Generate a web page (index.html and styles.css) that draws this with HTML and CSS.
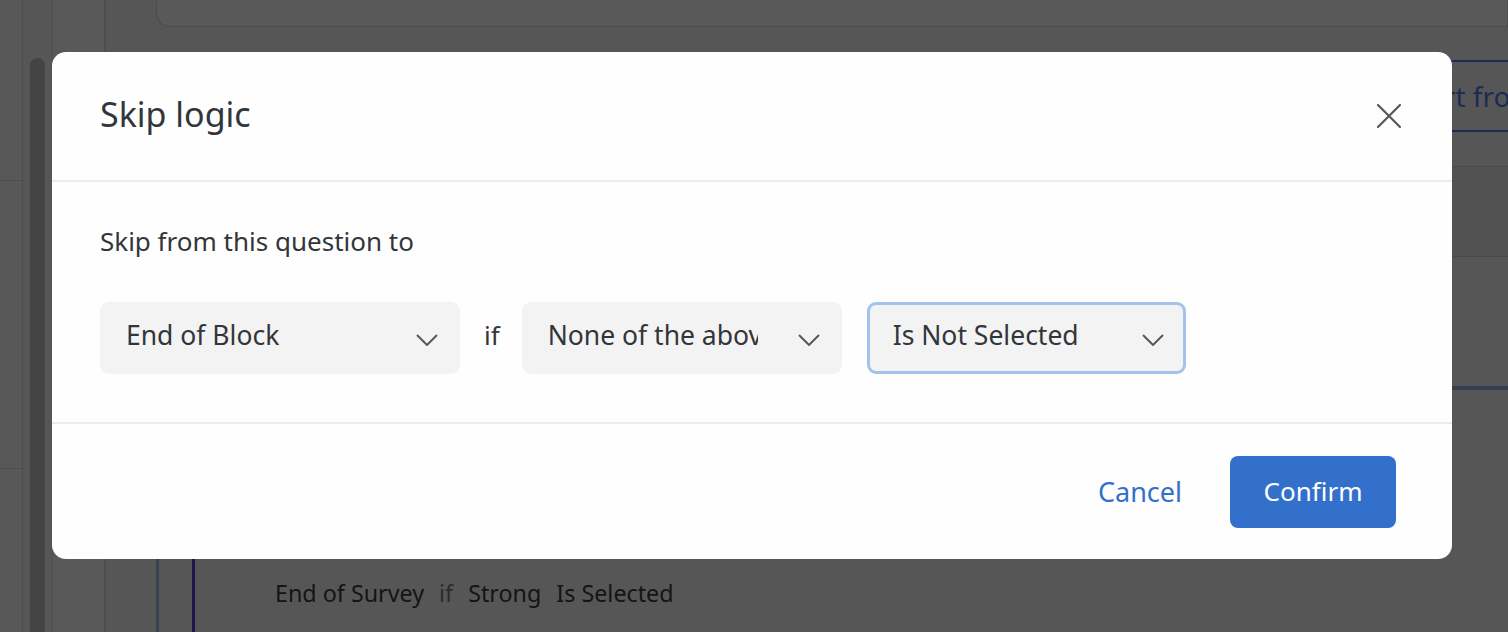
FILE: index.html
```html
<!DOCTYPE html>
<html lang="en">
<head>
<meta charset="utf-8">
<title>Skip logic</title>
<link rel="stylesheet" href="styles.css">
</head>
<body>
<div class="page">
  <div class="rail">
    <div class="rail-seg rail-seg-a"></div>
    <div class="rail-seg rail-seg-b"></div>
  </div>
  <div class="scroll-col">
    <div class="scroll-thumb"></div>
  </div>
  <div class="nav-col"></div>
  <div class="main">
    <div class="top-card"></div>
    <div class="toolbar">
      <div class="import-btn">Import from library</div>
    </div>
    <div class="band band-a"></div>
    <div class="band band-b"></div>
    <div class="block">
      <div class="block-inner">
        <div class="logic-line">
          <span class="logic-strong">End of Survey</span>
          <span class="logic-if">if</span>
          <span class="logic-strong">Strong</span>
          <span class="logic-strong">Is Selected</span>
        </div>
      </div>
    </div>
  </div>
</div>

<div class="modal" role="dialog" aria-labelledby="modal-title">
  <div class="modal-header">
    <h2 class="modal-title" id="modal-title">Skip logic</h2>
    <button class="close-btn" aria-label="Close">
      <svg width="26" height="26" viewBox="0 0 26 26"><path d="M2 2 L24 24 M24 2 L2 24" stroke="#55585c" stroke-width="2.2" fill="none" stroke-linecap="round"/></svg>
    </button>
  </div>
  <div class="modal-body">
    <p class="lead">Skip from this question to</p>
    <div class="rule-row">
      <div class="select select-wide">
        <span class="select-text">End of Block</span>
        <svg class="chev" width="22" height="12" viewBox="0 0 22 12"><path d="M1 1 L11 11 L21 1" stroke="#55585c" stroke-width="2" fill="none"/></svg>
      </div>
      <span class="if-word">if</span>
      <div class="select select-mid">
        <span class="select-text clip">None of the above</span>
        <svg class="chev" width="22" height="12" viewBox="0 0 22 12"><path d="M1 1 L11 11 L21 1" stroke="#55585c" stroke-width="2" fill="none"/></svg>
      </div>
      <div class="select select-mid focused">
        <span class="select-text">Is Not Selected</span>
        <svg class="chev" width="22" height="12" viewBox="0 0 22 12"><path d="M1 1 L11 11 L21 1" stroke="#55585c" stroke-width="2" fill="none"/></svg>
      </div>
    </div>
  </div>
  <div class="modal-footer">
    <button class="btn-link">Cancel</button>
    <button class="btn-primary">Confirm</button>
  </div>
</div>
</body>
</html>
```

FILE: styles.css
```css
* { box-sizing: border-box; }

html, body {
  margin: 0;
  padding: 0;
  width: 1508px;
  height: 632px;
  overflow: hidden;
  background: #565656;
  font-family: "Noto Sans", "Open Sans", "Liberation Sans", sans-serif;
  color: #32363a;
}

/* ---------- dimmed background page ---------- */
.page {
  display: flex;
  height: 632px;
  overflow: hidden;
}

.rail {
  width: 23px;
  border-right: 1px solid #4d4d4d;
  background: #585858;
  display: flex;
  flex-direction: column;
}
.rail-seg { border-bottom: 1px solid #4d4d4d; }
.rail-seg-a { height: 181px; }
.rail-seg-b { height: 288px; }

.scroll-col {
  width: 30px;
  padding: 58px 7px 0 7px;
  border-right: 1px solid #505050;
}
.scroll-thumb {
  height: 600px;
  border-radius: 8px;
  background: #444444;
}

.nav-col {
  width: 53px;
  border-right: 2px solid #4e4e4e;
  background: #595959;
}

.main {
  flex: 1;
  min-width: 0;
  display: flex;
  flex-direction: column;
  padding-left: 50px;
  overflow: hidden;
}

.top-card {
  flex: none;
  height: 27px;
  border: 1px solid #4c4c4c;
  border-top: none;
  border-radius: 0 0 0 14px;
  background: #595959;
}

.toolbar {
  flex: none;
  height: 140px;
  display: flex;
  justify-content: flex-end;
  align-items: flex-start;
  padding-top: 33px;
  border-bottom: 1px solid #4a4a4a;
  overflow: hidden;
}
.import-btn {
  flex: none;
  width: 156px;
  height: 72px;
  border: 2px solid #1b2b55;
  border-right: none;
  border-radius: 6px 0 0 6px;
  color: #1b2b55;
  font-size: 28px;
  line-height: 68px;
  padding-left: 20px;
  white-space: nowrap;
  overflow: hidden;
}

.band { flex: none; border-bottom: 1px solid #4a4a4a; }
.band-a { height: 90px; background: #525252; }
.band-b { height: 133px; background: #565656; border-bottom: 4px solid #34404f; }

.block {
  flex: 1;
  margin-top: 80px;
  border-left: 3px solid #3a4450;
  padding-left: 33px;
}
.block-inner {
  height: 100%;
  border-left: 3px solid #1e1650;
  padding-left: 80px;
  padding-top: 107px;
}
.logic-line {
  display: flex;
  gap: 15px;
  font-size: 23.3px;
  color: #141414;
}
.logic-if { color: #2c2c2c; }

/* ---------- modal ---------- */
.modal {
  position: absolute;
  left: 52px;
  top: 52px;
  width: 1400px;
  height: 507px;
  background: #fefefe;
  border-radius: 14px;
  display: flex;
  flex-direction: column;
  overflow: hidden;
}

.modal-header {
  height: 130px;
  border-bottom: 2px solid #ececec;
  display: flex;
  align-items: center;
  justify-content: space-between;
  padding: 0 50px 0 48px;
}
.modal-title {
  margin: 0 0 4px 0;
  font-size: 34px;
  font-weight: 400;
  color: #32363a;
}
.close-btn {
  border: none;
  background: none;
  padding: 0;
  width: 26px;
  height: 26px;
  display: flex;
}

.modal-body {
  height: 242px;
  border-bottom: 2px solid #ececec;
  padding: 43px 0 0 48px;
}
.lead {
  margin: 0 0 44px 0;
  font-size: 26px;
  line-height: 33px;
  color: #32363a;
}

.rule-row {
  display: flex;
  align-items: center;
}
.select {
  height: 72px;
  background: #f3f3f3;
  border-radius: 9px;
  display: flex;
  align-items: center;
  justify-content: space-between;
  padding: 0 22px 0 26px;
  font-size: 26.5px;
  color: #32363a;
}
.select-wide { width: 360px; }
.select-mid { width: 320px; }
.select-text {
  white-space: nowrap;
  margin-bottom: 7px;
}
.clip {
  width: 210px;
  overflow: hidden;
}
.chev { flex: none; margin-top: 4px; }
.focused {
  margin-left: 25px;
  width: 319px;
  border: 3px solid #a3c3ea;
  padding: 0 19px 0 23px;
}
.if-word {
  font-size: 26px;
  margin: 0 22px 6px 24px;
  color: #32363a;
}

.modal-footer {
  flex: 1;
  display: flex;
  justify-content: flex-end;
  align-items: flex-start;
  padding: 32px 56px 0 0;
}
.btn-link {
  border: none;
  background: none;
  color: #3370cc;
  font-family: inherit;
  font-size: 27px;
  height: 72px;
  padding: 0 0 2px 0;
  margin-right: 48px;
}
.btn-primary {
  width: 166px;
  height: 72px;
  border: none;
  border-radius: 8px;
  background: #3370cc;
  color: #ffffff;
  font-family: inherit;
  font-size: 26px;
  padding: 0 0 2px 0;
}
```
